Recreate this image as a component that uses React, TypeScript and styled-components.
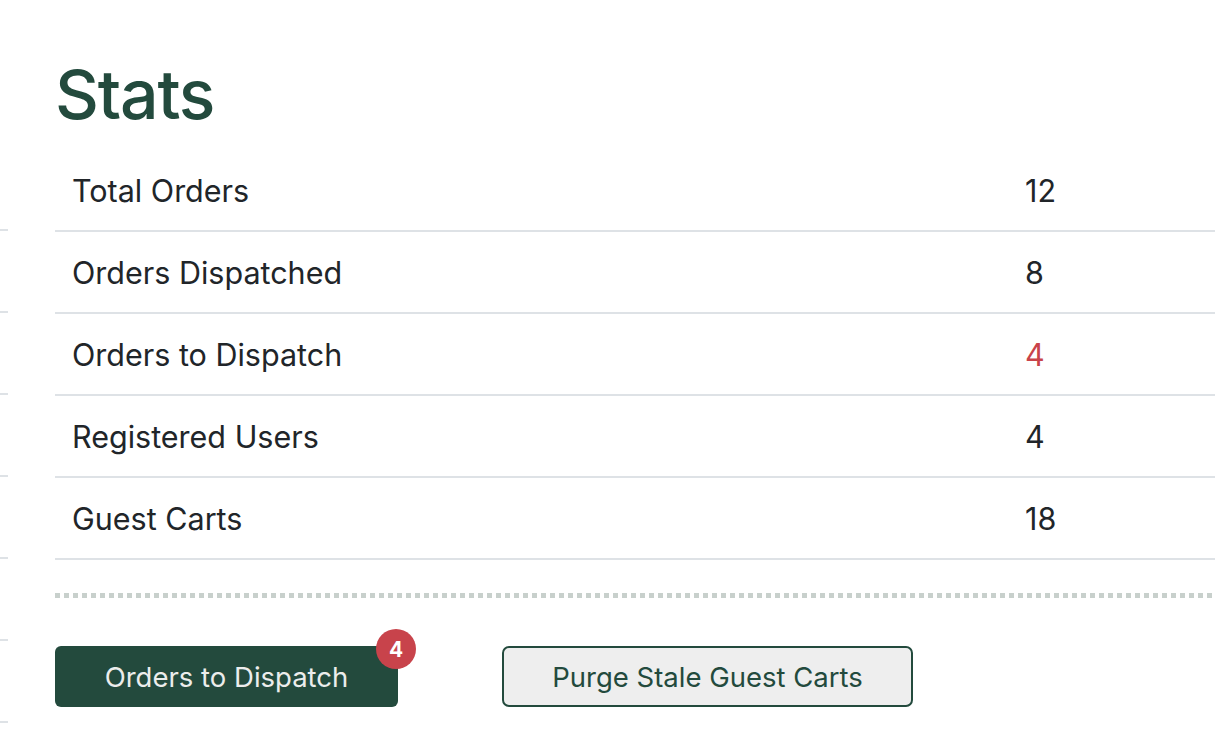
import React from "react";
import styled, { createGlobalStyle } from "styled-components";

const Global = createGlobalStyle`
  html, body { margin: 0; padding: 0; background: #ffffff; }
  body { font-family: Inter, "Noto Sans", sans-serif; color: #212529; }
  * { box-sizing: border-box; }
`;

const Page = styled.div`
  display: flex;
  width: 1228px;
  height: 754px;
  overflow: hidden;
`;

const Sliver = styled.div`
  width: 8px;
  flex: none;
  padding-top: 149px;
  display: flex;
  flex-direction: column;
`;

const SliverRow = styled.div`
  height: 82px;
  border-bottom: 2px solid #dee2e6;
`;

const Main = styled.main`
  margin-left: 47px;
  width: 1160px;
  display: flex;
  flex-direction: column;
`;

const Title = styled.h1`
  margin: 0;
  padding-top: 56px;
  height: 150px;
  font-family: Inter, "Noto Sans", sans-serif;
  font-weight: 500;
  font-size: 68px;
  line-height: 76px;
  color: #234a3d;
  letter-spacing: -1.2px;
`;

const Table = styled.div`
  display: flex;
  flex-direction: column;
`;

const Row = styled.div`
  display: grid;
  grid-template-columns: 953px 1fr;
  height: 82px;
  align-items: center;
  border-bottom: 2px solid #dee2e6;
`;

const Cell = styled.div<{ $alert?: boolean }>`
  padding: 0 17px;
  font-size: 30.5px;
  color: ${(p) => (p.$alert ? "#c9434a" : "#212529")};
`;

const Dotted = styled.div`
  margin-top: 33px;
  height: 5px;
  background: repeating-linear-gradient(
    to right,
    #c8d0cc 0,
    #c8d0cc 5px,
    transparent 5px,
    transparent 9px
  );
`;

const Actions = styled.div`
  margin-top: 48px;
  display: flex;
  gap: 104px;
  align-items: center;
`;

const PrimaryButton = styled.button`
  position: relative;
  height: 61px;
  width: 343px;
  border: none;
  border-radius: 6px;
  background: #234a3d;
  color: #ecedec;
  font-family: Inter, "Noto Sans", sans-serif;
  font-size: 27.5px;
  font-weight: 400;
  padding: 0;
  cursor: pointer;
`;

const Badge = styled.span`
  position: absolute;
  top: -17px;
  right: -18px;
  width: 40px;
  height: 40px;
  border-radius: 50%;
  background: #c8434b;
  color: #ffffff;
  font-size: 21px;
  font-weight: 700;
  display: flex;
  align-items: center;
  justify-content: center;
`;

const SecondaryButton = styled.button`
  height: 61px;
  width: 411px;
  border: 2px solid #234a3d;
  border-radius: 7px;
  background: #eeeeee;
  color: #234a3d;
  font-family: Inter, "Noto Sans", sans-serif;
  font-size: 27.5px;
  font-weight: 400;
  padding: 0;
  cursor: pointer;
`;

const stats: { label: string; value: string; alert?: boolean }[] = [
  { label: "Total Orders", value: "12" },
  { label: "Orders Dispatched", value: "8" },
  { label: "Orders to Dispatch", value: "4", alert: true },
  { label: "Registered Users", value: "4" },
  { label: "Guest Carts", value: "18" },
];

export default function App() {
  return (
    <>
      <Global />
      <Page>
        <Sliver>
          {Array.from({ length: 7 }).map((_, i) => (
            <SliverRow key={i} />
          ))}
        </Sliver>
        <Main>
          <Title>Stats</Title>
          <Table>
            {stats.map((s) => (
              <Row key={s.label}>
                <Cell>{s.label}</Cell>
                <Cell $alert={s.alert}>{s.value}</Cell>
              </Row>
            ))}
          </Table>
          <Dotted />
          <Actions>
            <PrimaryButton>
              Orders to Dispatch
              <Badge>4</Badge>
            </PrimaryButton>
            <SecondaryButton>Purge Stale Guest Carts</SecondaryButton>
          </Actions>
        </Main>
      </Page>
    </>
  );
}
